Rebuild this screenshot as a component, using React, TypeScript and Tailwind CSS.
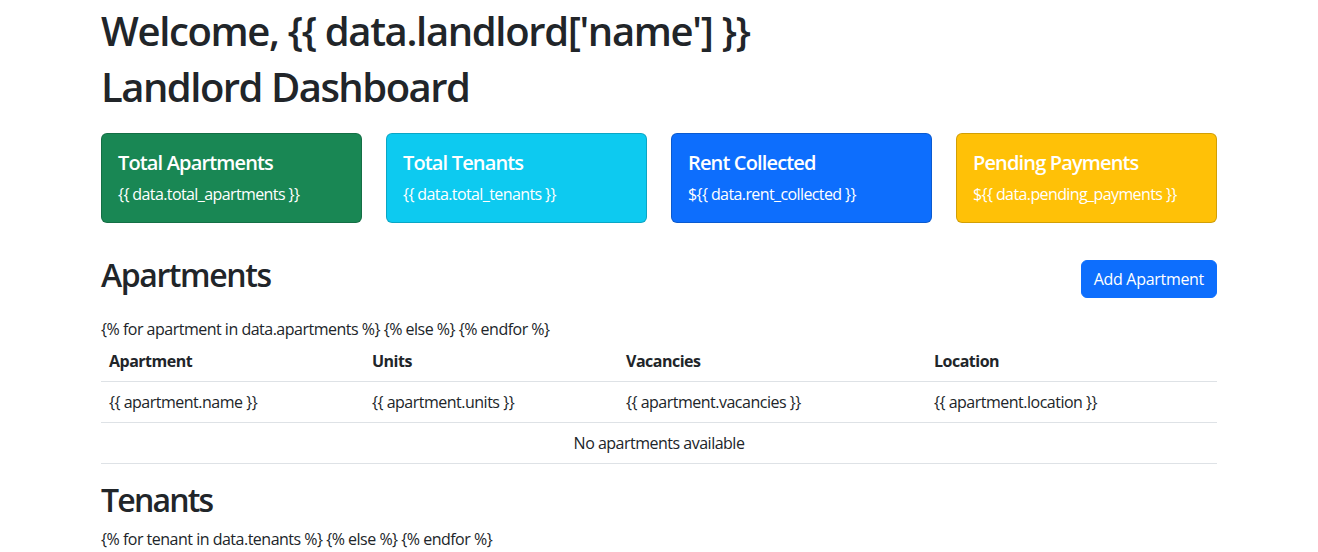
import React from "react";

const font = { fontFamily: '"Open Sans", "Noto Sans", sans-serif' };

function StatCard({ title, value, bg }: { title: string; value: string; bg: string }) {
  return (
    <div className={`w-[261px] h-[90px] rounded-[6px] border border-black/[0.175] ${bg} text-white p-4`}>
      <h5 className="text-[20px] leading-[24px] font-semibold tracking-[-0.85px] mb-[7px] pt-[1px]">{title}</h5>
      <p className="text-[16px] leading-[24px] tracking-[-0.6px]">{value}</p>
    </div>
  );
}

export default function App() {
  return (
    <div className="bg-white min-h-[552px] text-[#212529]" style={font}>
      <div className="w-[1140px] mx-auto px-3 pt-[7px]">
        <h1 className="text-[40px] leading-[48px] font-semibold tracking-[-1.35px] mb-2">Welcome, {"{{ data.landlord['name'] }}"}</h1>
        <h1 className="text-[40px] leading-[48px] font-semibold tracking-[-1.5px]">Landlord Dashboard</h1>

        <div className="flex gap-6 mt-[22px]">
          <StatCard title="Total Apartments" value="{{ data.total_apartments }}" bg="bg-[#198754]" />
          <StatCard title="Total Tenants" value="{{ data.total_tenants }}" bg="bg-[#0dcaf0]" />
          <StatCard title="Rent Collected" value="${{ data.rent_collected }}" bg="bg-[#0d6efd]" />
          <StatCard title="Pending Payments" value="${{ data.pending_payments }}" bg="bg-[#ffc107]" />
        </div>

        <div className="flex items-center justify-between mt-[33px] h-[46px]">
          <h2 className="text-[32px] leading-[38px] font-semibold tracking-[-1.4px] self-start">Apartments</h2>
          <button className="h-[38px] px-3 rounded-[6px] border border-[#0d6efd] bg-[#0d6efd] text-white text-[16px] leading-[24px] tracking-[-0.3px] -mt-[1px]">
            Add Apartment
          </button>
        </div>

        <div className="text-[16px] leading-[24px] tracking-[-0.5px]">
          <p className="mt-[15px]">{"{% for apartment in data.apartments %} {% else %} {% endfor %}"}</p>
          <table className="w-full border-collapse mb-4">
            <thead>
              <tr className="border-b border-[#dee2e6]">
                <th className="w-[263px] p-2 text-left font-bold">Apartment</th>
                <th className="w-[254px] p-2 text-left font-bold">Units</th>
                <th className="w-[308px] p-2 text-left font-bold">Vacancies</th>
                <th className="p-2 text-left font-bold">Location</th>
              </tr>
            </thead>
            <tbody>
              <tr className="border-b border-[#dee2e6]">
                <td className="p-2">{"{{ apartment.name }}"}</td>
                <td className="p-2">{"{{ apartment.units }}"}</td>
                <td className="p-2">{"{{ apartment.vacancies }}"}</td>
                <td className="p-2">{"{{ apartment.location }}"}</td>
              </tr>
              <tr className="border-b border-[#dee2e6]">
                <td colSpan={4} className="p-2 text-center">No apartments available</td>
              </tr>
            </tbody>
          </table>
        </div>

        <h2 className="text-[32px] leading-[38px] font-semibold tracking-[-1.8px] mb-2 pt-[1px]">Tenants</h2>
        <p className="text-[16px] leading-[24px] tracking-[-0.5px]">{"{% for tenant in data.tenants %} {% else %} {% endfor %}"}</p>
      </div>
    </div>
  );
}
